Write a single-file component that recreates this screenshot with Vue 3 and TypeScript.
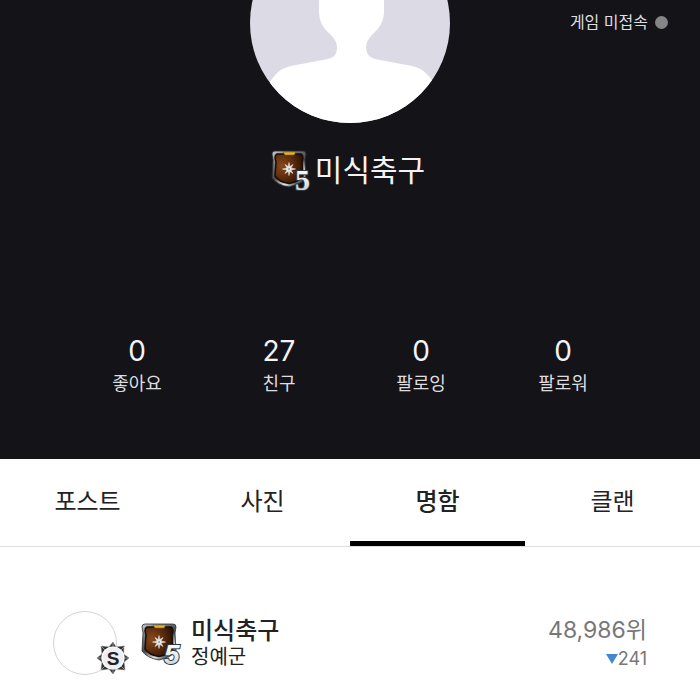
<script setup lang="ts">
import { ref } from 'vue'

interface Stat { label: string; value: number }

const stats: Stat[] = [
  { label: '좋아요', value: 0 },
  { label: '친구', value: 27 },
  { label: '팔로잉', value: 0 },
  { label: '팔로워', value: 0 },
]
const tabs: string[] = ['포스트', '사진', '명함', '클랜']
const activeTab = ref<string>('명함')
</script>

<template>
  <main class="page">
    <svg class="defs" width="0" height="0" aria-hidden="true">
      <defs>
        <radialGradient id="leather" cx="0.25" cy="0.4" r="0.85">
          <stop offset="0" stop-color="#87491c" />
          <stop offset="0.5" stop-color="#5b2b0b" />
          <stop offset="1" stop-color="#1d0d05" />
        </radialGradient>
        <linearGradient id="steel" x1="0" y1="0" x2="0.6" y2="1">
          <stop offset="0" stop-color="#c9cdd0" />
          <stop offset="0.3" stop-color="#74797d" />
          <stop offset="0.6" stop-color="#44484c" />
          <stop offset="0.85" stop-color="#e3e6e8" />
          <stop offset="1" stop-color="#55595d" />
        </linearGradient>
        <linearGradient id="silver" x1="0" y1="0" x2="0" y2="1">
          <stop offset="0" stop-color="#ffffff" />
          <stop offset="0.6" stop-color="#e4eaee" />
          <stop offset="1" stop-color="#b5bec4" />
        </linearGradient>
        <symbol id="shield" viewBox="0 0 40 44">
          <path d="M4 3 H32 Q35 3 35 6 L34 12 L35 30 Q31 36 18 39 Q6 37 1 30 L2 12 L1 6 Q1 3 4 3Z" fill="url(#steel)" stroke="#292b2e" stroke-width="0.8" />
          <path d="M6 6 H30 Q32 7 32 10 L31 14 L32 28 Q28 34 18 35.500 Q8 34 4 28 L5 14 L4 10 Q4 7 6 6Z" fill="url(#leather)" stroke="#180d07" stroke-width="1.500" />
          <path d="M12 4H25L23 7H14Z" fill="#e6b52f" stroke="#785813" stroke-width="0.600" />
          <path d="M18 14.500 L18.800 18.600 L22 16.500 L20 20 L24.500 21 L20 22 L22 25.500 L18.800 23.400 L18 27.500 L17.200 23.400 L14 25.500 L16 22 L11.500 21 L16 20 L14 16.500 L17.200 18.600Z" fill="#eceff0" stroke="#d7d8d6" stroke-width="0.600" />
          <circle cx="18" cy="21" r="1.200" fill="#aaaead" />
        </symbol>
      </defs>
    </svg>

    <header class="hero">
      <p class="status">게임 미접속<span class="dot"></span></p>
      <svg class="avatar" viewBox="0 0 200 200" role="img" aria-label="프로필">
        <clipPath id="round"><circle cx="100" cy="100" r="100" /></clipPath>
        <g clip-path="url(#round)">
          <rect width="200" height="200" fill="#dcdbe5" />
          <path d="M69 80 V90 C70 103 76 107 82 113 Q87 119 87 124 C87 132 84 134 78 136 L41 143 C31 145 25 151 20 159 L16 200 H188 L183 159 C178 151 172 145 162 143 L125 136 C119 134 116 131 116 124 Q116 119 121 113 C127 107 133 102 134 90 V80 C134 55 118 45 101 45 C83 45 69 57 69 80Z" fill="#fff" />
        </g>
      </svg>
      <div class="identity">
        <svg class="emblem" viewBox="0 0 40 44" aria-hidden="true">
          <use href="#shield" width="40" height="44" />
          <text x="24" y="42" class="rank">5</text>
        </svg>
        <h1>미식축구</h1>
      </div>
      <dl class="stats">
        <div v-for="stat in stats" :key="stat.label" class="stat">
          <dt>{{ stat.label }}</dt>
          <dd>{{ stat.value }}</dd>
        </div>
      </dl>
    </header>

    <nav class="tabs">
      <button
        v-for="tab in tabs"
        :key="tab"
        type="button"
        :class="{ active: tab === activeTab }"
        @click="activeTab = tab"
      >{{ tab }}</button>
    </nav>

    <section class="card">
      <div class="portrait">
        <svg class="medal" viewBox="0 0 32 32" aria-hidden="true">
          <path d="M16 0 L19 5 L27 4 L26.500 12 L32 16 L27 20 L28 28 L19 27 L16 32 L12 27 L4 28 L5 20 L0 16 L5 12 L4 4 L12 5Z" fill="#303236" stroke="#777" stroke-width="0.5" />
          <path d="M16 0V6M16 27V32M0 16H5M27 16H32M4 4L8 8M28 4L24 8M4 28L8 24M28 28L24 24" stroke="#aaa" stroke-width="0.8" />
          <circle cx="16" cy="16" r="11" fill="#efefef" stroke="#fff" stroke-width="1.200" />
          <text x="16" y="22.500" text-anchor="middle" class="grade">S</text>
        </svg>
      </div>
      <svg class="emblem" viewBox="0 0 40 44" aria-hidden="true">
        <use href="#shield" width="40" height="44" />
        <text x="23" y="43" class="rank sans">5</text>
      </svg>
      <div class="who">
        <h2>미식축구</h2>
        <p>정예군</p>
      </div>
      <div class="standing">
        <p class="place">48,986위</p>
        <p class="change">
          <svg viewBox="0 0 12 10" aria-hidden="true"><path d="M0 0H12L6 10Z" fill="#4288cb" /></svg>241
        </p>
      </div>
    </section>
  </main>
</template>

<style>
body {
  margin: 0;
  background: #fff;
}
</style>

<style scoped>
.page {
  font-family: Inter, "Noto Sans CJK KR", sans-serif;
  color: #222;
}
.defs {
  position: absolute;
}
h1, h2, p, dl, dd, dt {
  margin: 0;
  font-weight: 400;
}
.hero {
  position: relative;
  display: flex;
  flex-direction: column;
  align-items: center;
  overflow: hidden;
  padding-bottom: 60px;
  background: #131318;
  color: #f3f3f5;
}
.avatar {
  width: 200px;
  height: 200px;
  margin-top: -77px;
}
.status {
  position: absolute;
  top: 10px;
  right: 32px;
  display: flex;
  align-items: center;
  gap: 7px;
  font-size: 16px;
  line-height: 24px;
  color: #dedee0;
}
.dot {
  width: 13px;
  height: 13px;
  border-radius: 50%;
  background: #858585;
}
.identity {
  display: flex;
  align-items: center;
  gap: 4px;
  margin-top: 25px;
  padding-right: 4px;
}
.emblem {
  flex: none;
  width: 40px;
  height: 44px;
  overflow: visible;
}
.rank {
  font-family: "Liberation Serif", serif;
  font-size: 30px;
  font-weight: 700;
  fill: url(#silver);
  stroke: #33373b;
  stroke-width: 2px;
  paint-order: stroke;
}
.rank.sans {
  font-family: "Liberation Sans", sans-serif;
  font-size: 28px;
  font-style: italic;
}
h1 {
  font-size: 30px;
  line-height: 44px;
}
.stats {
  display: flex;
  align-self: stretch;
  margin-top: 141px;
  padding: 0 66px;
}
.stat {
  display: flex;
  flex: 1;
  flex-direction: column-reverse;
  text-align: center;
}
.stat dd {
  font-size: 28px;
  line-height: 36px;
}
.stat dt {
  font-size: 18px;
  line-height: 30px;
  color: #dedee0;
}
.tabs {
  display: flex;
  border-bottom: 1px solid #dedede;
}
.tabs button {
  position: relative;
  flex: 1;
  height: 87px;
  padding: 0 0 6px;
  border: 0;
  background: none;
  font-family: inherit;
  font-size: 24px;
  color: #222;
}
.tabs .active {
  font-weight: 500;
}
.tabs .active::after {
  content: "";
  position: absolute;
  right: 0;
  bottom: 0;
  left: 0;
  height: 5px;
  background: #000;
}
.card {
  display: flex;
  align-items: center;
  padding: 64px 53px 24px;
}
.portrait {
  position: relative;
  flex: none;
  box-sizing: border-box;
  width: 64px;
  height: 64px;
  border: 1px solid #d4d4d4;
  border-radius: 50%;
}
.medal {
  position: absolute;
  right: -13px;
  bottom: 0;
  width: 32px;
  height: 32px;
}
.grade {
  font-family: "Liberation Sans", sans-serif;
  font-size: 19px;
  font-weight: 700;
  fill: #202124;
}
.card .emblem {
  margin: 0 10px 0 24px;
}
.who h2 {
  font-size: 24px;
  font-weight: 500;
  line-height: 28px;
}
.who p {
  font-size: 20px;
  line-height: 24px;
}
.standing {
  margin-left: auto;
  text-align: right;
  color: #777;
}
.place {
  font-size: 23px;
  line-height: 32px;
}
.change {
  display: flex;
  align-items: center;
  justify-content: flex-end;
  font-size: 18px;
  line-height: 26px;
}
.change svg {
  width: 12px;
  height: 10px;
}
</style>
